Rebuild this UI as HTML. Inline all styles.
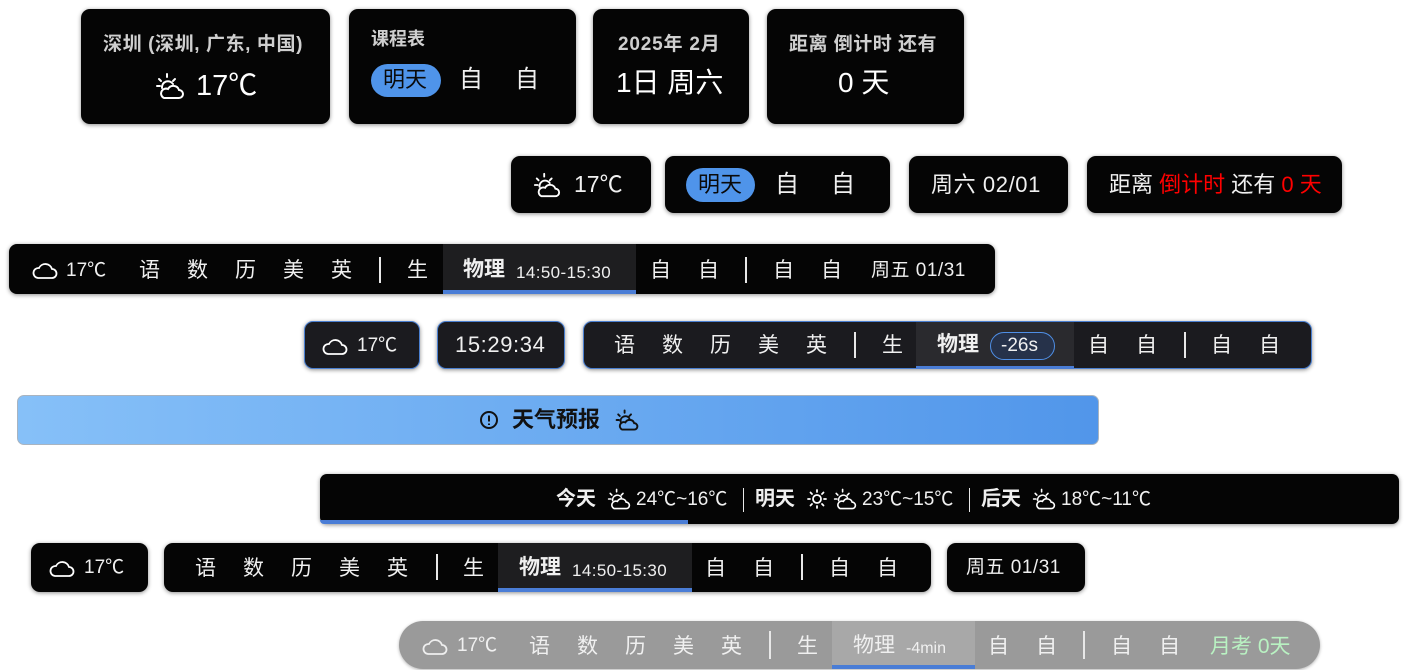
<!DOCTYPE html>
<html><head><meta charset="utf-8"><style>
*{margin:0;padding:0;box-sizing:border-box}
body{width:1408px;height:670px;background:#fff;position:relative;overflow:hidden;font-family:"Liberation Sans","Noto Sans CJK SC",sans-serif;color:#f0f0f0}
.b{position:absolute;background:#050505;border-radius:9px;box-shadow:0 1px 4px rgba(0,0,0,.45)}
.t{position:absolute;white-space:nowrap;line-height:1}
.s{position:absolute;width:2px;background:#e8e8e8}
svg{position:absolute}
</style></head><body>
<!-- Row 1 -->
<div class="b" style="left:81px;top:9px;width:249px;height:115px"></div>
<span class="t" style="left:103px;top:35px;font-size:19px;color:#cfcfcf;font-weight:bold;letter-spacing:0.6px">深圳 (深圳, 广东, 中国)</span>
<svg style="left:155px;top:71px" width="30" height="30" viewBox="0 0 30 30" fill="none" stroke="#fff" stroke-width="2" stroke-linecap="round"><path d="M12 3v3M4 8l2 2M20 8l-2 2M2 15h3"/><path d="M7 17a6 6 0 0 1 11-4"/><path d="M9 27h15a4 4 0 0 0 0-8 6 6 0 0 0-11-1 4.5 4.5 0 0 0-4 9z"/></svg>
<span class="t" style="left:196px;top:72px;font-size:29px;color:#fff">17℃</span>
<div class="b" style="left:349px;top:9px;width:227px;height:115px"></div>
<span class="t" style="left:371px;top:30px;font-size:18px;color:#cfcfcf;font-weight:bold">课程表</span>
<div style="position:absolute;left:371px;top:64px;width:70px;height:33px;border-radius:17px;background:#4f94ea"></div>
<span class="t" style="left:383px;top:69px;font-size:22px;color:#0a0a0a">明天</span>
<span class="t" style="left:459px;top:68px;font-size:24px">自</span>
<span class="t" style="left:515px;top:68px;font-size:24px">自</span>
<div class="b" style="left:593px;top:9px;width:156px;height:115px"></div>
<span class="t" style="left:618px;top:35px;font-size:19px;color:#cfcfcf;font-weight:bold;letter-spacing:0.8px">2025年 2月</span>
<span class="t" style="left:616px;top:69px;font-size:28px;color:#fff">1日 周六</span>
<div class="b" style="left:767px;top:9px;width:197px;height:115px"></div>
<span class="t" style="left:789px;top:35px;font-size:19px;color:#cfcfcf;font-weight:bold;letter-spacing:0.5px">距离 倒计时 还有</span>
<span class="t" style="left:838px;top:69px;font-size:28px;color:#fff">0 天</span>
<!-- Row 2 -->
<div class="b" style="left:511px;top:156px;width:140px;height:57px"></div>
<svg style="left:533px;top:171px" width="28" height="28" viewBox="0 0 30 30" fill="none" stroke="#fff" stroke-width="2" stroke-linecap="round"><path d="M12 3v3M4 8l2 2M20 8l-2 2M2 15h3"/><path d="M7 17a6 6 0 0 1 11-4"/><path d="M9 27h15a4 4 0 0 0 0-8 6 6 0 0 0-11-1 4.5 4.5 0 0 0-4 9z"/></svg>
<span class="t" style="left:574px;top:173px;font-size:23px">17℃</span>
<div class="b" style="left:665px;top:156px;width:225px;height:57px"></div>
<div style="position:absolute;left:686px;top:168px;width:69px;height:34px;border-radius:17px;background:#4f94ea"></div>
<span class="t" style="left:698px;top:174px;font-size:22px;color:#0a0a0a">明天</span>
<span class="t" style="left:775px;top:173px;font-size:24px">自</span>
<span class="t" style="left:831px;top:173px;font-size:24px">自</span>
<div class="b" style="left:909px;top:156px;width:159px;height:57px"></div>
<span class="t" style="left:931px;top:174px;font-size:22px;letter-spacing:0.6px">周六 02/01</span>
<div class="b" style="left:1087px;top:156px;width:255px;height:57px"></div>
<span class="t" style="left:1109px;top:174px;font-size:22px">距离 <span style="color:#f00">倒计时</span> 还有 <span style="color:#f00">0 天</span></span>
<!-- Row 3 -->
<div class="b" style="left:9px;top:244px;width:986px;height:50px;border-radius:8px"></div>
<div style="position:absolute;left:443px;top:244px;width:193px;height:50px;background:#1e1e20"></div>
<div style="position:absolute;left:443px;top:290px;width:193px;height:4px;background:#4a7dd6"></div>
<svg style="left:32px;top:260px" width="26" height="20" viewBox="0 0 26 20" fill="none" stroke="#fff" stroke-width="1.8"><path d="M6 18h14a4.5 4.5 0 0 0 0-9 7 7 0 0 0-13-1 5 5 0 0 0-1 10z"/></svg>
<span class="t" style="left:66px;top:261px;font-size:19px">17℃</span>
<span class="t" style="left:139px;top:260px;font-size:21px;letter-spacing:27px">语数历美英</span>
<div class="s" style="left:379px;top:257px;height:26px"></div>
<span class="t" style="left:407px;top:260px;font-size:21px">生</span>
<span class="t" style="left:463px;top:259px;font-size:21px;font-weight:bold">物理</span>
<span class="t" style="left:516px;top:264px;font-size:17px;letter-spacing:0.4px">14:50-15:30</span>
<span class="t" style="left:650px;top:260px;font-size:21px;letter-spacing:27px">自自</span>
<div class="s" style="left:745px;top:257px;height:26px"></div>
<span class="t" style="left:773px;top:260px;font-size:21px;letter-spacing:27px">自自</span>
<span class="t" style="left:871px;top:261px;font-size:19px;letter-spacing:0.5px">周五 01/31</span>
<!-- Row 4 -->
<div class="b" style="left:304px;top:321px;width:116px;height:48px;background:#1b1b1f;border:1px solid #4a7fd0"></div>
<svg style="left:322px;top:336px" width="26" height="20" viewBox="0 0 26 20" fill="none" stroke="#fff" stroke-width="1.8"><path d="M6 18h14a4.5 4.5 0 0 0 0-9 7 7 0 0 0-13-1 5 5 0 0 0-1 10z"/></svg>
<span class="t" style="left:357px;top:336px;font-size:19px">17℃</span>
<div class="b" style="left:437px;top:321px;width:128px;height:48px;background:#1b1b1f;border:1px solid #4a7fd0"></div>
<span class="t" style="left:455px;top:334px;font-size:22px;letter-spacing:0.6px">15:29:34</span>
<div class="b" style="left:583px;top:321px;width:729px;height:48px;background:#1b1b1f;border:1px solid #4a7fd0"></div>
<div style="position:absolute;left:916px;top:322px;width:158px;height:46px;background:#2a2a2e"></div>
<div style="position:absolute;left:916px;top:366px;width:158px;height:3px;background:#4a7dd6"></div>
<span class="t" style="left:614px;top:335px;font-size:21px;letter-spacing:27px">语数历美英</span>
<div class="s" style="left:854px;top:332px;height:26px"></div>
<span class="t" style="left:882px;top:335px;font-size:21px">生</span>
<span class="t" style="left:937px;top:334px;font-size:21px;font-weight:bold">物理</span>
<div style="position:absolute;left:990px;top:332px;width:65px;height:28px;border-radius:14px;border:1.5px solid #4f8fe6;background:#26324a"></div>
<span class="t" style="left:1001px;top:336px;font-size:19px">-26s</span>
<span class="t" style="left:1088px;top:335px;font-size:21px;letter-spacing:27px">自自</span>
<div class="s" style="left:1184px;top:332px;height:26px"></div>
<span class="t" style="left:1211px;top:335px;font-size:21px;letter-spacing:27px">自自</span>
<!-- Row 5 -->
<div style="position:absolute;left:17px;top:395px;width:1082px;height:50px;border-radius:7px;background:linear-gradient(90deg,#86c0f8,#5196ea);border:1px solid #a9b4c0"></div>
<svg style="left:479px;top:410px" width="20" height="20" viewBox="0 0 20 20" fill="none" stroke="#111" stroke-width="2"><circle cx="10" cy="10" r="8"/><path d="M10 5.5v6M10 13.5v1.5"/></svg>
<span class="t" style="left:512px;top:409px;font-size:22px;font-weight:bold;color:#111">天气预报</span>
<svg style="left:615px;top:408px" width="24" height="24" viewBox="0 0 30 30" fill="none" stroke="#111" stroke-width="2.4" stroke-linecap="round"><path d="M12 3v3M4 8l2 2M20 8l-2 2M2 15h3"/><path d="M7 17a6 6 0 0 1 11-4"/><path d="M9 27h15a4 4 0 0 0 0-8 6 6 0 0 0-11-1 4.5 4.5 0 0 0-4 9z"/></svg>
<!-- Row 6 -->
<div class="b" style="left:320px;top:474px;width:1079px;height:50px;border-radius:7px"></div>
<div style="position:absolute;left:320px;top:520px;width:368px;height:4px;background:#4a7dd6;border-bottom-left-radius:7px"></div>
<span class="t" style="left:556px;top:489px;font-size:20px;font-weight:bold">今天</span>
<svg style="left:607px;top:487px" width="24" height="24" viewBox="0 0 30 30" fill="none" stroke="#fff" stroke-width="2" stroke-linecap="round"><path d="M12 3v3M4 8l2 2M20 8l-2 2M2 15h3"/><path d="M7 17a6 6 0 0 1 11-4"/><path d="M9 27h15a4 4 0 0 0 0-8 6 6 0 0 0-11-1 4.5 4.5 0 0 0-4 9z"/></svg>
<span class="t" style="left:636px;top:490px;font-size:19px">24℃~16℃</span>
<div class="s" style="left:743px;top:488px;height:24px;width:1px"></div>
<span class="t" style="left:755px;top:489px;font-size:20px;font-weight:bold">明天</span>
<svg style="left:806px;top:488px" width="22" height="22" viewBox="0 0 22 22" fill="none" stroke="#fff" stroke-width="1.8" stroke-linecap="round"><circle cx="11" cy="11" r="4"/><path d="M11 2v2M11 18v2M2 11h2M18 11h2M4.5 4.5l1.5 1.5M16 16l1.5 1.5M4.5 17.5L6 16M16 6l1.5-1.5"/></svg>
<svg style="left:833px;top:487px" width="24" height="24" viewBox="0 0 30 30" fill="none" stroke="#fff" stroke-width="2" stroke-linecap="round"><path d="M12 3v3M4 8l2 2M20 8l-2 2M2 15h3"/><path d="M7 17a6 6 0 0 1 11-4"/><path d="M9 27h15a4 4 0 0 0 0-8 6 6 0 0 0-11-1 4.5 4.5 0 0 0-4 9z"/></svg>
<span class="t" style="left:862px;top:490px;font-size:19px">23℃~15℃</span>
<div class="s" style="left:969px;top:488px;height:24px;width:1px"></div>
<span class="t" style="left:981px;top:489px;font-size:20px;font-weight:bold">后天</span>
<svg style="left:1032px;top:487px" width="24" height="24" viewBox="0 0 30 30" fill="none" stroke="#fff" stroke-width="2" stroke-linecap="round"><path d="M12 3v3M4 8l2 2M20 8l-2 2M2 15h3"/><path d="M7 17a6 6 0 0 1 11-4"/><path d="M9 27h15a4 4 0 0 0 0-8 6 6 0 0 0-11-1 4.5 4.5 0 0 0-4 9z"/></svg>
<span class="t" style="left:1061px;top:490px;font-size:19px">18℃~11℃</span>
<!-- Row 7 -->
<div class="b" style="left:31px;top:543px;width:117px;height:49px"></div>
<svg style="left:49px;top:558px" width="26" height="20" viewBox="0 0 26 20" fill="none" stroke="#fff" stroke-width="1.8"><path d="M6 18h14a4.5 4.5 0 0 0 0-9 7 7 0 0 0-13-1 5 5 0 0 0-1 10z"/></svg>
<span class="t" style="left:84px;top:558px;font-size:19px">17℃</span>
<div class="b" style="left:164px;top:543px;width:767px;height:49px"></div>
<div style="position:absolute;left:498px;top:543px;width:194px;height:49px;background:#1e1e20"></div>
<div style="position:absolute;left:498px;top:588px;width:194px;height:4px;background:#4a7dd6"></div>
<span class="t" style="left:195px;top:558px;font-size:21px;letter-spacing:27px">语数历美英</span>
<div class="s" style="left:436px;top:554px;height:26px"></div>
<span class="t" style="left:463px;top:558px;font-size:21px">生</span>
<span class="t" style="left:519px;top:557px;font-size:21px;font-weight:bold">物理</span>
<span class="t" style="left:572px;top:562px;font-size:17px;letter-spacing:0.4px">14:50-15:30</span>
<span class="t" style="left:705px;top:558px;font-size:21px;letter-spacing:27px">自自</span>
<div class="s" style="left:801px;top:554px;height:26px"></div>
<span class="t" style="left:829px;top:558px;font-size:21px;letter-spacing:27px">自自</span>
<div class="b" style="left:947px;top:543px;width:138px;height:49px"></div>
<span class="t" style="left:966px;top:558px;font-size:19px;letter-spacing:0.5px">周五 01/31</span>
<!-- Row 8 -->
<div style="position:absolute;left:399px;top:621px;width:921px;height:48px;border-radius:24px;background:#9a9a9a;overflow:hidden;box-shadow:0 1px 3px rgba(0,0,0,.3)">
<div style="position:absolute;left:433px;top:0;width:143px;height:48px;background:#a8a8a8"></div>
<div style="position:absolute;left:433px;top:44px;width:143px;height:4px;background:#4a7dd6"></div>
</div>
<svg style="left:422px;top:636px" width="26" height="20" viewBox="0 0 26 20" fill="none" stroke="#eee" stroke-width="1.8"><path d="M6 18h14a4.5 4.5 0 0 0 0-9 7 7 0 0 0-13-1 5 5 0 0 0-1 10z"/></svg>
<span class="t" style="left:457px;top:636px;font-size:19px">17℃</span>
<span class="t" style="left:529px;top:636px;font-size:21px;letter-spacing:27px">语数历美英</span>
<div class="s" style="left:769px;top:631px;height:28px"></div>
<span class="t" style="left:797px;top:636px;font-size:21px">生</span>
<span class="t" style="left:853px;top:635px;font-size:21px">物理</span>
<span class="t" style="left:906px;top:641px;font-size:16px">-4min</span>
<span class="t" style="left:988px;top:636px;font-size:21px;letter-spacing:27px">自自</span>
<div class="s" style="left:1083px;top:631px;height:28px"></div>
<span class="t" style="left:1111px;top:636px;font-size:21px;letter-spacing:27px">自自</span>
<span class="t" style="left:1210px;top:636px;font-size:21px;color:#b9f2c2">月考 0天</span>
</body></html>
